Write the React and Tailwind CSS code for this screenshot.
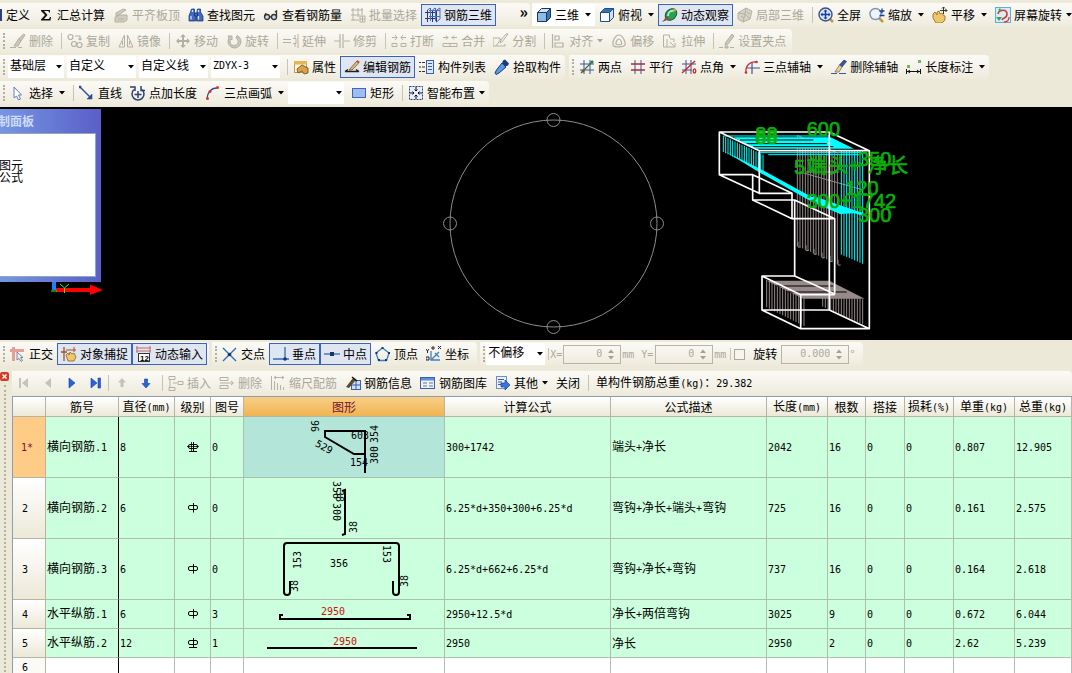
import React from 'react';
import clsx from 'clsx';

const G = '#b5b1a2';
const B = '#2f4f8f';

// 16x16 toolbar drawings
const icons = {
  sum: <path d="M3 3h9v2.500h-1L10.500 4H6l3.500 4L6 12h5l1-2h1l-.5 3.500H3v-1L7 8 3 4z" fill="#111" />,
  slab: (
    <g fill="#cfccc0" stroke={G}>
      <path d="M2 10l5-2h7v5l-3 2H2z" />
      <path d="M3 6l7-4 3 1-6 4-4 2z" />
      <path d="M5 12h6" />
    </g>
  ),
  binoculars: (
    <g fill="#3f6cc0" stroke="#13296b" strokeWidth=".7">
      <path d="M3.500 2h3v3l1 2v7h-6.500v-5z" />
      <path d="M9.500 2h3v3l2.500 4v5H8.500V7z" />
      <path d="M6.500 6h3v3h-3z" />
      <path d="M3 9v3.500M10.500 9v3.500M4.500 3v2M10.500 3v2" stroke="#cfe0ff" strokeWidth="1.300" />
    </g>
  ),
  glasses: (
    <g fill="none" stroke="#333" strokeWidth="1.300">
      <circle cx="4" cy="10" r="2.500" fill="#cfe0e6" />
      <circle cx="11" cy="10" r="2.500" fill="#cfe0e6" />
      <path d="M6.500 10h2M1.500 9.500L3 6M13.500 10V4l-1.500 1" />
    </g>
  ),
  batch: <path d="M1 3h12M1 8h9M1 13h8M3 1v13M8 1v9M12 1v7M10 9h5v6h-5zM10 12h5M12.500 9v6" fill="none" stroke={G} />,
  grid3d: (
    <g fill="none" stroke="#223a70">
      <path d="M0 5.500h12M0 11.500h12M2.500 3v12M7.500 3v12M11.500 3v12" />
      <path d="M2.500 3L5 1M7.500 3L10 1M11.500 3L15 1M5.500 1v13M10.500 1v13M4 3.500h11M4 9.500h11M15 1v11l-3.500 3" stroke="#4a6fb5" />
    </g>
  ),
  cube: (
    <g stroke="#17375e" strokeLinejoin="round">
      <path d="M1.500 5.500h9v9h-9z" fill="#8fbce6" />
      <path d="M1.500 5.500l4-4h9l-4 4z" fill="#cfe4f7" />
      <path d="M10.500 5.500l4-4v9l-4 4z" fill="#3d77b5" />
    </g>
  ),
  topview: (
    <g stroke="#2b4c78" strokeLinejoin="round">
      <path d="M1.500 5.500h9v9h-9z" fill="#f6fafe" />
      <path d="M1.500 5.500l4-4h9l-4 4z" fill="#2d73c0" />
      <path d="M10.500 5.500l4-4v9l-4 4z" fill="#cfe2f5" />
    </g>
  ),
  orbit: (
    <g>
      <ellipse cx="9" cy="7.500" rx="6.500" ry="5" transform="rotate(-45 9 7.500)" fill="#28a05a" stroke="#0e5c30" />
      <path d="M6 9c0-4 3-6 6-5" stroke="#a8f0c0" strokeWidth="1.800" fill="none" />
      <path d="M0 15l5-6 3 3z" fill="#7c5a40" />
      <circle cx="12.500" cy="3" r="1.500" fill="#e0a030" />
    </g>
  ),
  local3d: (
    <g fill="#d5d2c6" stroke={G}>
      <path d="M1 6l8-5 6 3-2 8-7 3-5-3z" />
      <path d="M9 1l-1 6 5 5M1 6l7 1-2 8M4 9l3 2M10 5l3 2" fill="none" />
    </g>
  ),
  full: (
    <g fill="none">
      <path d="M11 11l4 4" stroke="#c99a3a" strokeWidth="2.500" />
      <circle cx="7.500" cy="7.500" r="6.500" fill="#dce9fa" stroke="#3c4f86" strokeWidth="1.400" />
      <path d="M7.500 3v9M3 7.500h9" stroke="#1c3f9c" strokeWidth="1.500" />
      <path d="M5.500 4.500l2-2 2 2zM5.500 10.500l2 2 2-2zM4.500 5.500l-2 2 2 2zM10.500 5.500l2 2-2 2z" fill="#1c3f9c" />
    </g>
  ),
  zoom: (
    <g fill="none">
      <path d="M10 11l4 4" stroke="#c99a3a" strokeWidth="2.500" />
      <circle cx="6.500" cy="7" r="5.500" fill="#eef4fb" stroke="#8290ac" strokeWidth="1.400" />
      <path d="M10.500 4h5M13 1.500v5M10.500 8.500h5" stroke="#1c3f9c" strokeWidth="1.300" />
    </g>
  ),
  pan: (
    <g>
      <path d="M1 7l2-2 2 3V5l2-1 1 3 2-1 1 2 2 1v4l-3 3H4l-3-5z" fill="#f0c66a" stroke="#8a6420" strokeWidth=".8" />
      <path d="M11.500 0v7M8 3.500h7M10 1.500L11.500 0 13 1.500M13.500 2L15 3.500 13.500 5" stroke="#333" fill="none" />
    </g>
  ),
  rotateScreen: (
    <g fill="none">
      <rect x=".5" y=".5" width="15" height="15" fill="#d9edf8" stroke="#5ab0d8" />
      <path d="M3 7c1-5 9-5 9 0s-4 3-5 6" stroke="#d23b2f" strokeWidth="1.600" />
      <path d="M1 10h6l-3 4z" fill="#3fa552" />
      <path d="M3 3l2-2 2 4z" fill="#3fa552" />
      <path d="M9 15c3 0 5-2 5-5" stroke="#d23b2f" strokeWidth="1.300" />
    </g>
  ),
  brushGray: (
    <g fill="#cbc8bb" stroke={G}>
      <path d="M13.500 1l1.500 1-4 6-2.500-2z" />
      <path d="M8.500 6L11 8l-3 5H4z" />
      <path d="M0 14.500h6M8 14.500h4" />
    </g>
  ),
  copy: (
    <g fill="none" stroke={G} strokeWidth="1.200">
      <circle cx="3.500" cy="4" r="2.500" />
      <circle cx="7" cy="11" r="2.500" />
      <circle cx="12.500" cy="12" r="2.500" />
      <path d="M8 3h5v4M11.500 5.500L13 7l1.500-1.500" />
    </g>
  ),
  mirror: <path d="M6.500 2v12H1zM9.500 2v12H15zM4.500 8v4M11.500 8v4" fill="none" stroke={G} />,
  move: <path d="M8 1l3 3H9v3h3V5l3 3-3 3V9H9v3h2l-3 3-3-3h2V9H4v2L1 8l3-3v2h3V4H5z" fill={G} />,
  rotate: <path d="M2 3h4v4L5 6a4 4 0 1 0 5-1l1-2.500A6.500 6.500 0 1 1 3 5z" fill="#cbc8bb" stroke={G} />,
  extend: <path d="M0 6.500h8M0 9.500h8M10 5.500h3v5h-3M15 1v14M12 2v3M12 11v3" fill="none" stroke={G} />,
  trim: <path d="M0 8h6M10 8h6M6 1v14M9 1v14" fill="none" stroke={G} strokeWidth="1.200" />,
  breakIc: <path d="M1 4.500h5M10 4.500h5M4 2L6 4.500 4 7M12 2l-2 2.500L12 7M1 10.500h5v3H1zM10 10.500h5v3h-5z" fill="none" stroke={G} />,
  join: <path d="M1 4.500h5M10 4.500h5M4 2.500l2 2-2 2M12 2.500l-2 2 2 2M1 10.500h14v3H1zM8 10v4" fill="none" stroke={G} />,
  split: <path d="M0 5h7v2M0 5v8h12v-2M15 1l-6 8-2 1 1-3 5-6zM3 13L8 6" fill="none" stroke={G} />,
  align: <path d="M2.500 1v14M5 3h4v4H5zM5 10h8v4H5z" fill="none" stroke={G} strokeWidth="1.200" />,
  offset: <path d="M8 2c4 0 7 8 6 10s-11 3-12 0S4 2 8 2zM8 6c2 0 3 4 2.500 5s-5 1-5.500 0S6 6 8 6z" fill="none" stroke={G} strokeWidth="1.200" />,
  stretch: <path d="M1.500 2v12H9M1.500 2h6v3M8 6h4v3M8 9l5 5M13 10v4H9M5 14V6" fill="none" stroke={G} />,
  gripPt: (
    <g fill="#cbc8bb" stroke={G}>
      <path d="M13 1l2 2-6 8-3 1 1-3z" />
      <path d="M0 14.500h4M11 14.500h4M6 13h3v2H6z" />
    </g>
  ),
  props: (
    <g>
      <rect x="1.500" y="2.500" width="12" height="11" fill="#fff6d8" stroke="#c09a48" />
      <path d="M1 2h13v3.500H1z" fill="#e7b553" />
      <path d="M4 10l5-4 6 3v5l-4 1-2-3-4 2z" fill="#d9a14a" stroke="#6b4a18" strokeWidth=".8" />
    </g>
  ),
  editBar: (
    <g fill="none">
      <path d="M1 12.500h14M4 10.500l-3 2M15 12.500l-3-2" stroke="#222" strokeWidth="1.400" />
      <path d="M5 11L13 2l2 1.500L8 11z" fill="#e9c27a" stroke="#6b4a18" strokeWidth=".8" />
      <path d="M13 2l2 1.500" stroke="#d0342c" strokeWidth="1.600" />
    </g>
  ),
  list: (
    <g fill="none">
      <rect x="7.500" y="1.500" width="7" height="13" fill="#dce8fa" stroke="#3a5fa8" />
      <path d="M9 4.500h4M9 7.500h4M9 10.500h4" stroke="#3a5fa8" />
      <path d="M0 3.500h2M3 3.500h3M0 8h2M3 8h3M0 12.500h2M3 12.500h3" stroke="#333" />
    </g>
  ),
  picker: (
    <g>
      <path d="M9 1.500l2-1 4 4-1 2-3 1-3-3z" fill="#1b3b7c" />
      <path d="M8 4l4 4-7 6-3 1.500L1 14l1.500-3z" fill="#5b9be0" stroke="#1b3b7c" />
    </g>
  ),
  twoPt: (
    <g fill="none">
      <path d="M5 1v14M11 1v14M1 5h14M1 11h14" stroke="#41558c" />
      <path d="M2 14L14 2" stroke="#2c7a4a" strokeWidth="1.300" />
      <circle cx="13" cy="3" r="1.500" fill="#2c7a4a" />
      <circle cx="4" cy="12" r="1.500" fill="#8a5030" />
    </g>
  ),
  parallel: (
    <g fill="none">
      <path d="M5 1v14M11 1v14" stroke="#41558c" />
      <path d="M1 5h14M1 11h14" stroke="#a22c48" strokeWidth="1.400" />
    </g>
  ),
  ptAngle: (
    <g fill="none">
      <path d="M5 1v14M10 1v14M1 5h14M1 11h10" stroke="#41558c" />
      <path d="M1 14L14 2" stroke="#d0262c" strokeWidth="1.400" />
      <ellipse cx="13.500" cy="12" rx="1.300" ry="2" stroke="#d0262c" strokeWidth="1.300" />
    </g>
  ),
  arcAxis: (
    <g fill="none">
      <path d="M8 3v12M3 9h13" stroke="#41558c" strokeWidth="1.200" />
      <path d="M2 14C1 7 6 2 12 3" stroke="#c8283a" strokeWidth="1.300" />
      <circle cx="12.500" cy="3" r="1.300" fill="#c8283a" />
      <circle cx="2" cy="13.500" r="1.300" fill="#c8283a" />
    </g>
  ),
  brush: (
    <g>
      <path d="M13 1l2.500 1.500L11 8 8.500 6z" fill="#3558a8" stroke="#1c2f66" strokeWidth=".7" />
      <path d="M8.500 6L11 8l-3 5H4z" fill="#e7d2a8" stroke="#7a5a2a" strokeWidth=".7" />
      <path d="M0 14.500h6M8 14.500h7" stroke="#3558a8" />
    </g>
  ),
  dim: (
    <g fill="none">
      <path d="M.5 10v5M14.500 10v5M1 12.500h13M4 11l-2 1.500L4 14M11 11l2 1.500-2 1.500" stroke="#111" />
      <path d="M1 6h3v3H1zM12 1h3v3h-3z" fill="#6fb46a" />
    </g>
  ),
  pointer: <path d="M4 2v11l2.500-2 2 4 2-1-2-4h3z" fill="#fff" stroke="#6a7eb8" />,
  line: (
    <g stroke={B} fill="none" strokeWidth="1.400">
      <path d="M1 2l11 11" />
      <path d="M0 1h2v2H0zM13 9v5H8z" fill={B} strokeWidth=".6" />
    </g>
  ),
  ptLen: (
    <g stroke="#2b426f" fill="none" strokeWidth="1.500">
      <path d="M4 4.500A6 6 0 1 0 12 4.500M8 6v7M4.500 9.500h7" />
      <path d="M0 2h5v4M15 5.500h-4V1" />
    </g>
  ),
  arc: (
    <g fill="none">
      <path d="M2 14C2 8 6 3 12 3" stroke="#2f4f8f" strokeWidth="1.300" />
      <circle cx="12.500" cy="2.500" r="1.500" fill="#d03a30" />
      <circle cx="5" cy="6.500" r="1.500" fill="#d03a30" />
      <circle cx="2.500" cy="13.500" r="1.500" fill="#d03a30" />
    </g>
  ),
  rect: <rect x="1.500" y="3.500" width="13" height="9" fill="#9dbdf3" stroke="#3f66b8" />,
  smart: (
    <g fill="none" stroke="#2b426f">
      <rect x="1.500" y="1.500" width="13" height="13" strokeDasharray="2 1" fill="#e6eefb" />
      <path d="M8 2v4M8 10v4M2 8h4M10 8h4M6.500 4.500L8 6l1.500-1.500M6.500 11.500L8 10l1.500 1.500M4.500 6.500L6 8 4.500 9.500M11.500 6.500L10 8l1.500 1.500" stroke="#111" />
    </g>
  ),
  ortho: (
    <g>
      <path d="M0 3h14v3H5v9H2V6H0zM2 1h3v3H2z" fill="#e3a09a" />
      <path d="M7 6v8l2-1.500 2 3 1.500-1-2-3h2.500z" fill="#e8eef4" stroke="#5b7390" strokeWidth=".8" />
    </g>
  ),
  snap: (
    <g>
      <path d="M3 1v14M0 6h6" stroke="#a0522d" strokeWidth="1.300" />
      <path d="M5 9l2-2 1 2 1-3 2 2 2-1 2 4-2 4H7z" fill="#f0c66a" stroke="#8a6420" strokeWidth=".8" />
      <path d="M13 1v5M5 4h10" stroke="#a0522d" />
    </g>
  ),
  dyn: (
    <g>
      <path d="M0 2h15M0 5h15M1 0v7M14 0v7" stroke="#c46a6a" fill="none" />
      <rect x="2.500" y="7.500" width="11" height="8" fill="#fff" stroke="#333" />
      <text x="4" y="14.500" fontSize="8" fontWeight="bold" fontFamily="Liberation Sans">12</text>
    </g>
  ),
  cross: (
    <g stroke="#2d6db5" strokeWidth="1.400">
      <path d="M1 2l13 13M14 2L1 15" />
      <circle cx="7.500" cy="8.500" r="1.800" fill="#16366b" stroke="none" />
    </g>
  ),
  perp: (
    <g stroke="#2d6db5" strokeWidth="1.300">
      <path d="M0 13h16M12 1v12" />
      <circle cx="12" cy="13" r="1.800" fill="#16366b" stroke="none" />
    </g>
  ),
  mid: (
    <g stroke="#2d6db5" strokeWidth="1.300">
      <path d="M0 8h16" />
      <path d="M6 6h4v4H6z" fill="#16366b" stroke="none" />
    </g>
  ),
  vertex: (
    <g fill="none" stroke="#3f7fc4">
      <path d="M7.500 2L14 7l-2.500 7.500h-8L1 7z" strokeWidth="1.300" />
      <path d="M6.500 1h2v2h-2zM.5 6h2v2h-2zM13 6h2v2h-2zM3 13h2v2H3zM10 13h2v2h-2z" fill="#16366b" stroke="none" />
    </g>
  ),
  coord: (
    <g fill="none" stroke="#3f7fc4">
      <path d="M5 5v9h9M5 14l8-8M9 7l4 4" strokeWidth="1.300" />
      <path d="M0 3l1.500 2L3 3M1.500 5v2M0 11h3v3H0zM12 0l3 3M15 0l-3 3M6 1h2v2H6z" stroke="#223" />
    </g>
  ),
  first: <path d="M3 3h2v10H3zM12 3v10L6 8z" fill="#c4c2ba" />,
  prev: <path d="M11 3v10L5 8z" fill="#c4c2ba" />,
  next: <path d="M5 3v10l6-5z" fill="#2a62d8" stroke="#1642a8" strokeWidth=".6" />,
  last: <path d="M3 3v10l6-5zM10 3h2.500v10H10z" fill="#2a62d8" stroke="#1642a8" strokeWidth=".6" />,
  up: <path d="M8 3l4 4.500H9.500V12h-3V7.500H4z" fill="#c4c2ba" />,
  down: <path d="M8 13l4-4.500H9.500V4h-3v4.500H4z" fill="#2a62d8" stroke="#1642a8" strokeWidth=".6" />,
  insert: <path d="M1 1.500h6v3H1zM1 12.500h6v3H1zM2 4v8M5 8h4M10 6.500h5v3h-5z" fill="none" stroke={G} />,
  del: <path d="M1 2.500h8v3H1zM1 10.500h8v3H1zM1 8h13M12 6l2.500 2L12 10" fill="none" stroke={G} />,
  scale: <path d="M1.500 1v14M4 2.500h10M6 1L4 2.500 6 4M12 1l2 1.500L12 4M4.500 6v9M7.500 8v7M10.500 10v5M13.500 12v3" fill="none" stroke={G} />,
  info: (
    <g>
      <rect x="6.500" y="5.500" width="9" height="9" fill="#cfe0f8" stroke="#3a5fa8" />
      <path d="M11 6v8M7 10h8" stroke="#3a5fa8" />
      <path d="M1 12L8 3l3 1.500L10 6 4 13z" fill="#5d4a2c" />
      <path d="M7 2l5 4" stroke="#111" strokeWidth="1.500" />
    </g>
  ),
  lib: (
    <g>
      <rect x=".5" y="2.500" width="14" height="11" fill="#eaf2fd" stroke="#3a5fa8" />
      <path d="M1 3h13v2.500H1z" fill="#5f8fdc" />
      <path d="M3 8h4M3 11h4M9 8h4M9 11h4" stroke="#777" />
    </g>
  ),
  other: (
    <g>
      <rect x="1.500" y="1.500" width="10" height="12" fill="#eaf2fd" stroke="#6f8fc8" />
      <path d="M3 4.500h6M3 7h4M3 9.500h3" stroke="#3a5fa8" />
      <path d="M6 8h4V5l5 5-5 5v-3H6z" fill="#3c74dc" stroke="#1642a8" strokeWidth=".7" />
    </g>
  ),
};

function Icon({ name }) {
  return (
    <svg viewBox="0 0 16 16" className="w-4 h-4 shrink-0" aria-hidden="true">
      {icons[name]}
    </svg>
  );
}

// Latin runs are set half as wide as the Chinese characters
function Mixed({ text }) {
  return String(text)
    .split(/([\x20-\x7e]+)/)
    .map((part, i) =>
      i % 2 ? (
        <span key={i} className="font-['DejaVu_Sans_Mono',monospace] text-[10px] whitespace-pre">
          {part}
        </span>
      ) : (
        part
      )
    );
}

function Arrow({ className }) {
  return (
    <svg viewBox="0 0 6 4" className={clsx('w-1.5 h-1 shrink-0', className)} aria-hidden="true">
      <path d="M0 0h6L3 3.500z" fill="currentColor" />
    </svg>
  );
}

function Tool({ icon, label, on, off, arrow, tight }) {
  return (
    <button
      type="button"
      disabled={off}
      aria-pressed={on}
      className={clsx(
        'flex items-center h-[22px] px-[3px] border shrink-0',
        on ? 'border-[#3a62c0] bg-[#dfe6f2]' : 'border-transparent',
        off && 'text-[#aca899]'
      )}
    >
      {icon && <Icon name={icon} />}
      {label && <span className={icon && 'ml-[3px]'}>{label}</span>}
      {arrow && <Arrow className={tight ? 'ml-1' : 'ml-1.5'} />}
    </button>
  );
}

function Sep({ flush }) {
  return <span className={clsx('w-px h-4 mr-px bg-[#c8c4b4] shrink-0', !flush && 'ml-1')} />;
}

function Grip() {
  return <span className="w-0.5 h-4 ml-[3px] mr-px border-l-2 border-dotted border-[#b5b09c] shrink-0" />;
}

function Bar({ className, children }) {
  return (
    <div
      className={clsx(
        'flex items-center h-6 rounded-r-sm bg-gradient-to-b from-[#fbfaf6] to-[#eeebdd] shrink-0',
        className
      )}
    >
      {children}
    </div>
  );
}

function Combo({ label, value, className, mono }) {
  return (
    <div className={clsx('relative h-[22px] mr-[3px] bg-white shrink-0', className)}>
      <select
        aria-label={label}
        defaultValue={value}
        className={clsx(
          'appearance-none w-full h-full pl-0.5 pb-1 bg-transparent outline-none',
          mono && "font-['DejaVu_Sans_Mono',monospace] text-[10px]"
        )}
      >
        <option>{value}</option>
      </select>
      <Arrow className="absolute right-0.5 top-[9px] pointer-events-none" />
    </div>
  );
}

function Spin({ id, label, value, className }) {
  return (
    <span className={clsx('flex h-[19px] border border-[#b9b5a5] shrink-0', className)}>
      <input
        id={id}
        aria-label={label}
        disabled
        defaultValue={value}
        className="min-w-0 flex-1 text-right pr-1.5 bg-transparent text-[#aca899] font-['DejaVu_Sans_Mono',monospace] text-[10px]"
      />
      <span className="flex flex-col justify-between w-3 py-[3px] text-[#a5a190]">
        <button type="button" disabled aria-label="增加" className="flex">
          <Arrow className="rotate-180" />
        </button>
        <button type="button" disabled aria-label="减少" className="flex">
          <Arrow />
        </button>
      </span>
    </span>
  );
}

function TopBars() {
  return (
    <div className="flex flex-col gap-0.5 pt-[3px] pb-0.5">
      <div className="flex gap-0.5">
        <Bar className="w-[530px]">
          <button type="button" className="flex items-center h-[22px] pr-1">
            <span className="w-0.5 h-3 mr-1 bg-[#2b3f78]" />
            定义
          </button>
          <Tool icon="sum" label="汇总计算" />
          <Tool icon="slab" label="平齐板顶" off />
          <Tool icon="binoculars" label="查找图元" />
          <Tool icon="glasses" label="查看钢筋量" />
          <Tool icon="batch" label="批量选择" off />
          <Tool icon="grid3d" label="钢筋三维" on />
          <button type="button" aria-label="更多" className="ml-auto mr-0.5 pb-2 text-base font-bold leading-4">
            »
          </button>
        </Bar>
        <Bar>
          <div className="flex bg-white">
            <Tool icon="cube" label="三维" arrow />
          </div>
          <Tool icon="topview" label="俯视" arrow />
          <Tool icon="orbit" label="动态观察" on />
          <Tool icon="local3d" label="局部三维" off />
          <Sep />
          <Tool icon="full" label="全屏" />
          <Tool icon="zoom" label="缩放" arrow />
          <Tool icon="pan" label="平移" arrow />
          <Tool icon="rotateScreen" label="屏幕旋转" arrow tight />
        </Bar>
      </div>

      <div className="flex">
        <Bar className="pr-0.5">
          <Grip />
          <Tool icon="brushGray" label="删除" off />
          <Sep />
          <Tool icon="copy" label="复制" off />
          <Tool icon="mirror" label="镜像" off />
          <Sep />
          <Tool icon="move" label="移动" off />
          <Tool icon="rotate" label="旋转" off />
          <Sep />
          <Tool icon="extend" label="延伸" off />
          <Tool icon="trim" label="修剪" off />
          <Sep />
          <Tool icon="breakIc" label="打断" off />
          <Tool icon="join" label="合并" off />
          <Tool icon="split" label="分割" off />
          <Sep />
          <Tool icon="align" label="对齐" off arrow tight />
          <Tool icon="offset" label="偏移" off />
          <Tool icon="stretch" label="拉伸" off />
          <Sep />
          <Tool icon="gripPt" label="设置夹点" off />
        </Bar>
      </div>

      <div className="flex gap-1">
        <Bar>
          <Grip />
          <Combo label="楼层" value="基础层" className="w-14 ml-0.5" />
          <Combo label="构件类型" value="自定义" className="w-[69px]" />
          <Combo label="构件种类" value="自定义线" className="w-[69px]" />
          <Combo label="构件" value="ZDYX-3" className="w-[69px]" mono />
          <Sep />
          <Tool icon="props" label="属性" />
          <Tool icon="editBar" label="编辑钢筋" on />
          <Tool icon="list" label="构件列表" />
          <Tool icon="picker" label="拾取构件" />
        </Bar>
        <Bar>
          <Grip />
          <Tool icon="twoPt" label="两点" />
          <Tool icon="parallel" label="平行" />
          <Tool icon="ptAngle" label="点角" arrow />
          <Tool icon="arcAxis" label="三点辅轴" arrow />
          <Tool icon="brush" label="删除辅轴" />
          <Tool icon="dim" label="长度标注" arrow />
        </Bar>
      </div>

      <div className="flex">
        <Bar>
          <Grip />
          <Tool icon="pointer" label="选择" arrow />
          <Sep />
          <Tool icon="line" label="直线" />
          <Tool icon="ptLen" label="点加长度" />
          <Tool icon="arc" label="三点画弧" arrow />
          <Combo label="弧线方式" value="" className="w-14" />
          <Tool icon="rect" label="矩形" />
          <Sep />
          <Tool icon="smart" label="智能布置" arrow tight />
        </Bar>
      </div>
    </div>
  );
}

function range(from, to, step) {
  const out = [];
  for (let x = from; x <= to; x += step) out.push(x);
  return out;
}

// the bent-plate model with its bars, drawn on a grid three times finer than the screen
function Model() {
  return (
    <g transform="translate(700 3) scale(0.33333)" fill="none">
      <g stroke="#978a8a" strokeWidth="3">
        {range(292, 415, 8).map((x) => (
          <path key={x} d={`M${x} ${78 + (x - 292) * 0.45}V${408 + (x - 292) * 0.45}`} />
        ))}
        {range(290, 410, 24).map((x) => (
          <path key={x} d={`M${x + 4} ${396 + (x - 292) * 0.45}v16h8`} />
        ))}
        {range(200, 318, 8).map((x) => (
          <path key={x} d={`M${x} ${510 + (x - 200) * 0.47}V${592 + (x - 200) * 0.5}`} />
        ))}
        {range(368, 494, 8).map((x) => (
          <path key={x} d={`M${x} ${520 + (x - 368) * 0.4}V${590 + (x - 368) * 0.44}`} />
        ))}
        <path d="M292 76L415 130M300 186L490 240M318 186h100" />
      </g>
      <path d="M200 512H388L494 566H310z" fill="#978a8a" />
      <path d="M230 528H400M262 546H440" stroke="#000" strokeWidth="3" />
      <g stroke="#0ff" strokeWidth="3">
        {range(70, 190, 7).map((x) => (
          <path key={x} d={`M${x} ${78 + (x - 70) * 0.47}V${126 + (x - 70) * 0.5}`} />
        ))}
        {range(424, 495, 8).map((x) => (
          <path key={x} d={`M${x} 122V${434 + (x - 424) * 0.43}`} />
        ))}
        <path d="M70 78H390M180 128H500M205 134H480" />
      </g>
      <path d="M100 82H392L462 116H165z" fill="#0ff" />
      <path d="M120 90H340M140 101H380M160 110H400" stroke="#000" strokeWidth="3" />
      <path d="M74 124L180 176 330 258 400 286 490 308 420 312 330 272 180 188z" fill="#0ff" />
      <path d="M340 262L490 314" stroke="#0ff" strokeWidth="8" />
      <g stroke="#fff" strokeWidth="5" strokeLinejoin="round">
        <path d="M58 66H388L508 122H178zV194L178 250V122M58 194H158L276 250V326L158 270V194" />
        <path d="M178 250H276M158 270H284L404 326H276M404 326V552L284 498V270" />
        <path d="M388 66V600L508 656V122M284 498H186L302 554H404M186 498V600L302 656V554M302 656H508M186 600H388" />
      </g>
      <g
        fill="#0cae0c"
        stroke="#0cae0c"
        strokeWidth="2"
        fontSize="60"
        fontFamily="'Liberation Sans','Noto Sans CJK SC',sans-serif"
      >
        <text x="166" y="94">88</text>
        <text x="166" y="102">88</text>
        <text x="320" y="78">600</text>
        <text x="282" y="191">5</text>
        <text x="320" y="190">端</text>
        <text x="386" y="190">头+</text>
        <text x="504" y="190">净长</text>
        <text x="474" y="168">350</text>
        <text x="436" y="255">120</text>
        <text x="320" y="295">300+1742</text>
        <text x="474" y="335">300</text>
      </g>
    </g>
  );
}

function Viewport() {
  return (
    <div className="relative h-[233px] bg-black overflow-hidden">
      <svg width="1072" height="233" className="block">
        <g fill="none" stroke="#8c8c8c">
          <circle cx="553.500" cy="116.500" r="103.500" />
          <circle cx="553.500" cy="13" r="6.500" />
          <circle cx="553.500" cy="220" r="6.500" />
          <circle cx="450" cy="116.500" r="6.500" />
          <circle cx="657" cy="116.500" r="6.500" />
        </g>
        <path d="M54 172v11" stroke="#1e80ff" strokeWidth="4" />
        <path d="M56 183h36" stroke="#f00" strokeWidth="4" />
        <path d="M90 177.500l13 5.500-13 5z" fill="#f00" />
        <path d="M60 177l4.500 4 4.500-4M64.500 181v5M51 184h6" stroke="#2f2" fill="none" />
        <Model />
      </svg>
      <div className="absolute left-0 top-0.5 w-[101px] h-[173px] pr-[5px] pb-[5px] bg-gradient-to-r from-[#7696e4] to-[#5a5fc6] overflow-hidden">
        <h2 className="flex h-6 items-center -ml-0.5 font-bold text-[#cfdcf8] whitespace-nowrap">制面板</h2>
        <div className="h-[144px] -ml-0.5 border border-[#8fa8c0] bg-white pt-[25px] leading-3">
          <p>图元</p>
          <p>公式</p>
        </div>
      </div>
    </div>
  );
}

function SnapBar() {
  return (
    <div className="flex gap-[3px] pt-0.5 pb-[5px]">
      <Bar className="pr-0.5">
        <Grip />
        <Tool icon="ortho" label="正交" />
        <Tool icon="snap" label="对象捕捉" on />
        <Tool icon="dyn" label="动态输入" on />
      </Bar>
      <Bar className="pr-1">
        <Grip />
        <Tool icon="cross" label="交点" />
        <Tool icon="perp" label="垂点" on />
        <Tool icon="mid" label="中点" on />
        <Tool icon="vertex" label="顶点" />
        <Tool icon="coord" label="坐标" />
      </Bar>
      <Bar className="pr-2">
        <Grip />
        <Combo label="偏移方式" value="不偏移" className="w-[59px]" />
        <span className="w-px h-3 bg-[#c8c4b4]" />
        <label htmlFor="offset-x" className="mx-px text-[#aca899]">
          <Mixed text="X=" />
        </label>
        <Spin id="offset-x" value="0" className="w-[58px]" />
        <span className="text-[#aca899] ml-px mr-[7px]">
          <Mixed text="mm" />
        </span>
        <label htmlFor="offset-y" className="mr-0.5 text-[#aca899]">
          <Mixed text="Y=" />
        </label>
        <Spin id="offset-y" value="0" className="w-[58px]" />
        <span className="text-[#aca899] ml-px mr-1">
          <Mixed text="mm" />
        </span>
        <span className="w-px h-3 mr-[3px] bg-[#c8c4b4]" />
        <input
          id="rotate"
          type="checkbox"
          className="appearance-none w-[11px] h-[11px] border border-[#aca899] bg-[#f6f4ec]"
        />
        <label htmlFor="rotate" className="ml-2 mr-1">
          旋转
        </label>
        <Spin label="旋转角度" value="0.000" className="w-[68px]" />
        <span className="ml-px text-[#aca899]">°</span>
      </Bar>
    </div>
  );
}

const digits = {
  fontSize: 10,
  fontFamily: "'DejaVu Sans Mono',monospace",
  textAnchor: 'middle',
  dominantBaseline: 'central',
  stroke: 'none',
};

function Num({ x, y, r = 0, fill = '#000', children }) {
  return (
    <text {...digits} fill={fill} transform={`translate(${x} ${y}) rotate(${r})`}>
      {children}
    </text>
  );
}

const shapes = [
  <>
    <path d="M121 56V14H81v6l29 17h11" />
    <Num x={71} y={9} r={-90}>96</Num>
    <Num x={116} y={18}>603</Num>
    <Num x={80} y={30} r={28}>529</Num>
    <Num x={130} y={17} r={-90}>354</Num>
    <Num x={130} y={38} r={-90}>300</Num>
    <Num x={115} y={45}>154</Num>
  </>,
  <>
    <path d="M98 13l3-1v44l-3 1" />
    <Num x={92} y={12} r={90}>358</Num>
    <Num x={95} y={18} r={90}>38</Num>
    <Num x={92} y={34} r={90}>300</Num>
    <Num x={109} y={49} r={-90}>38</Num>
  </>,
  <>
    <path d="M46 42v11q0 3-3 3t-3-3V7q0-3 3-3h109q3 0 3 3v46q0 3-3 3t-3-3V42" />
    <Num x={53} y={21} r={-90}>153</Num>
    <Num x={95} y={24}>356</Num>
    <Num x={142} y={15} r={90}>153</Num>
    <Num x={50} y={47} r={-90}>38</Num>
    <Num x={160} y={42} r={-90}>38</Num>
  </>,
  <>
    <path d="M39 15h-3v4h130v-4h-3" />
    <Num x={89} y={11} fill="#d01010">2950</Num>
  </>,
  <>
    <path d="M23 19h150" />
    <Num x={101} y={12} fill="#d01010">2950</Num>
  </>,
];

function Grade({ level }) {
  return (
    <svg viewBox="0 0 12 12" className="w-3 h-3 mx-auto" fill="none" stroke="#000" role="img" aria-label={`${level}级钢`}>
      <rect x="1.500" y="3.500" width="9" height="4" rx="1.500" />
      <path d="M6.500 1v9.500" />
      {level > 1 && <path d="M2 10.500h8" />}
      {level > 2 && <path d="M4.500 1v9M0 5.500h12" strokeWidth=".8" />}
    </svg>
  );
}

const rows = [
  ['横向钢筋.1', 8, 3, 0, '300+1742', '端头+净长', 2042, 16, 0, 0, 0.807, '12.905'],
  ['横向钢筋.2', 6, 1, 0, '6.25*d+350+300+6.25*d', '弯钩+净长+端头+弯钩', 725, 16, 0, 0, 0.161, '2.575'],
  ['横向钢筋.3', 6, 1, 0, '6.25*d+662+6.25*d', '弯钩+净长+弯钩', 737, 16, 0, 0, 0.164, '2.618'],
  ['水平纵筋.1', 6, 1, 3, '2950+12.5*d', '净长+两倍弯钩', 3025, 9, 0, 0, 0.672, '6.044'],
  ['水平纵筋.2', 12, 2, 1, '2950', '净长', 2950, 2, 0, 0, 2.62, '5.239'],
];

const columns = [
  ['', 'w-[33px]'],
  ['筋号', 'w-[73px]'],
  ['直径(mm)', 'w-[56px]'],
  ['级别', 'w-[36px]'],
  ['图号', 'w-[33px]'],
  ['图形', 'w-[201px]'],
  ['计算公式', 'w-[166px]'],
  ['公式描述', 'w-[156px]'],
  ['长度(mm)', 'w-[61px]'],
  ['根数', 'w-[38px]'],
  ['搭接', 'w-[39px]'],
  ['损耗(%)', 'w-[49px]'],
  ['单重(kg)', 'w-[61px]'],
  ['总重(kg)', ''],
];

function Cell({ i, children, className }) {
  return (
    <td
      className={clsx(
        'border-r border-b border-b-[#aebfae] p-0 pl-px',
        i === 0 ? 'border-r-black' : 'border-r-[#aebfae]',
        className
      )}
    >
      {children}
    </td>
  );
}

function RebarTable() {
  return (
    <table className="w-full table-fixed border-separate border-spacing-0 bg-white whitespace-nowrap leading-4">
      <colgroup>
        {columns.map(([name, width]) => (
          <col key={name} className={width} />
        ))}
      </colgroup>
      <thead>
        <tr>
          {columns.map(([name]) => (
            <th
              key={name}
              className={clsx(
                'h-5 p-0 font-normal border-r border-b border-[#b8b4a4] bg-gradient-to-b',
                name === '图形' ? 'from-[#f8cf86] to-[#efb450] text-[#7a1030]' : 'from-white to-[#ece9d8]'
              )}
            >
              <Mixed text={name} />
            </th>
          ))}
        </tr>
      </thead>
      <tbody>
        {rows.map((row, r) => (
          <tr key={row[0]} className={clsx('bg-[#ccffdd]', r < 3 ? 'h-[61px]' : 'h-[29px]')}>
            <th
              className={clsx(
                'p-0 font-normal border-r border-b border-[#b8b4a4]',
                r === 0 ? 'bg-[#ffcc88] pr-1 text-[#7a1030]' : 'pr-2 bg-gradient-to-b from-white to-[#ece9d8]'
              )}
            >
              <Mixed text={r === 0 ? '1*' : r + 1} />
            </th>
            {row.slice(0, 2).map((v, i) => (
              <Cell key={i} i={i}>
                <Mixed text={v} />
              </Cell>
            ))}
            <Cell>
              <Grade level={row[2]} />
            </Cell>
            <Cell>
              <Mixed text={row[3]} />
            </Cell>
            <td className={clsx('p-0 border-r border-b border-[#aebfae]', r === 0 && 'bg-[#b3e6d8]')}>
              <svg
                width="200"
                height={r < 3 ? 60 : 28}
                className="block"
                fill="none"
                stroke="#000"
                strokeWidth="2"
              >
                {shapes[r]}
              </svg>
            </td>
            {row.slice(4).map((v, i) => (
              <Cell key={i}>
                <Mixed text={v} />
              </Cell>
            ))}
          </tr>
        ))}
        <tr className="h-4">
          <th className="p-0 pr-2 font-normal border-r border-[#b8b4a4] bg-[#fbfaf6]">
            <Mixed text="6" />
          </th>
          {columns.slice(1).map(([name], i) => (
            <Cell key={name} i={i} className="border-b-0" />
          ))}
        </tr>
      </tbody>
    </table>
  );
}

function RebarPanel() {
  return (
    <div className="flex">
      <div className="flex flex-col w-3 shrink-0">
        <button
          type="button"
          aria-label="关闭面板"
          className="w-[9px] h-[9px] mt-px rounded-xs bg-[#cf3f28] text-white"
        >
          <svg viewBox="0 0 9 9" className="w-[9px] h-[9px]">
            <path d="M2.500 2.500l4 4M6.500 2.500l-4 4" stroke="#fff" strokeWidth="1.300" />
          </svg>
        </button>
        <span className="flex-1 ml-1 mt-1 border-l-2 border-dotted border-[#b5b09c]" />
      </div>
      <div className="flex-1 min-w-0">
        <Bar className="mb-px">
          <Tool icon="first" off />
          <Tool icon="prev" off />
          <Tool icon="next" />
          <Tool icon="last" />
          <Sep flush />
          <Tool icon="up" off />
          <Tool icon="down" />
          <Sep />
          <Tool icon="insert" label="插入" off />
          <Tool icon="del" label="删除" off />
          <Tool icon="scale" label="缩尺配筋" off />
          <Tool icon="info" label="钢筋信息" />
          <Tool icon="lib" label="钢筋图库" />
          <Tool icon="other" label="其他" arrow tight />
          <Tool label="关闭" />
          <Sep />
          <span className="ml-1.5">
            <Mixed text="单构件钢筋总重(kg)：29.382" />
          </span>
        </Bar>
        <div className="border-l border-t border-[#8e9cb0]">
          <RebarTable />
        </div>
      </div>
    </div>
  );
}

export default function App() {
  return (
    <div className="bg-[#ece9d8] text-black text-xs leading-4 whitespace-nowrap overflow-hidden font-['Noto_Sans_CJK_SC',sans-serif]">
      <TopBars />
      <Viewport />
      <SnapBar />
      <RebarPanel />
    </div>
  );
}
